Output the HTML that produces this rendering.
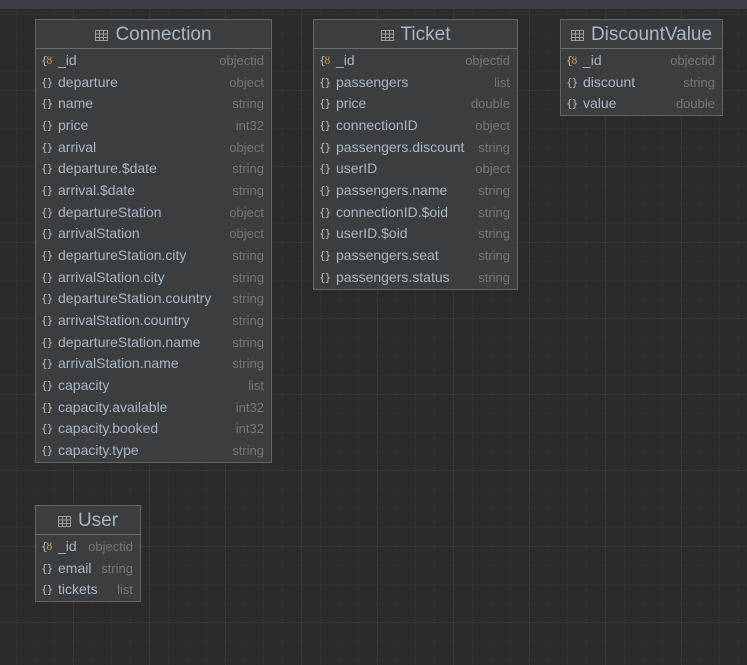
<!DOCTYPE html>
<html><head><style>
html,body{margin:0;padding:0}
body{width:747px;height:665px;overflow:hidden;position:relative;background-color:#2b2b2b;
background-image:
linear-gradient(to right,#363636 1px,transparent 1px),
linear-gradient(to bottom,#363636 1px,transparent 1px),
linear-gradient(to right,#2f2f2f 1px,transparent 1px),
linear-gradient(to bottom,#2f2f2f 1px,transparent 1px);
background-size:76px 76px,76px 76px,19px 19px,19px 19px;
background-position:73px 14px,73px 14px,16px 14px,16px 14px;
font-family:"Liberation Sans","DejaVu Sans",sans-serif}
.top{position:absolute;left:0;top:0;width:747px;height:9px;background:#3c3f41}
.t{position:absolute;background:#3b3d3f;border:1px solid #626466;box-sizing:border-box}
.h{height:28px;border-bottom:1px solid #6a6c6e;text-align:center;color:#a9b7c6;font-size:19px;line-height:29px;white-space:nowrap}
.h svg{vertical-align:-1px;margin-right:7px}
.r{height:21.67px;line-height:21.67px;position:relative;font-size:14px;color:#a9b7c6;white-space:nowrap}
.r .i{position:absolute;left:5px;top:0;color:#b8b8b8;font-size:11px;font-family:"DejaVu Sans Mono",monospace;letter-spacing:-1px}
.r .n{position:absolute;left:22px}
.r .y{position:absolute;right:7px;color:#75777a;font-size:13px}
.k{color:#d9a343}
.b{padding-top:1px}
</style></head><body>
<div class="top"></div>

<div class="t" style="left:35px;top:19px;width:237px;height:444px">
<div class="h"><svg width="13" height="11" viewBox="0 0 13 11"><rect x="0.5" y="0.5" width="12" height="10" fill="none" stroke="#9a9c9e"/><path d="M0 4h13M0 7.5h13M4.5 1v10M8.5 1v10" stroke="#9a9c9e"/></svg>Connection</div>
<div class="b">
<div class="r"><span class="i">{<span class="k">ȣ</span></span><span class="n">_id</span><span class="y">objectid</span></div>
<div class="r"><span class="i">{}</span><span class="n">departure</span><span class="y">object</span></div>
<div class="r"><span class="i">{}</span><span class="n">name</span><span class="y">string</span></div>
<div class="r"><span class="i">{}</span><span class="n">price</span><span class="y">int32</span></div>
<div class="r"><span class="i">{}</span><span class="n">arrival</span><span class="y">object</span></div>
<div class="r"><span class="i">{}</span><span class="n">departure.$date</span><span class="y">string</span></div>
<div class="r"><span class="i">{}</span><span class="n">arrival.$date</span><span class="y">string</span></div>
<div class="r"><span class="i">{}</span><span class="n">departureStation</span><span class="y">object</span></div>
<div class="r"><span class="i">{}</span><span class="n">arrivalStation</span><span class="y">object</span></div>
<div class="r"><span class="i">{}</span><span class="n">departureStation.city</span><span class="y">string</span></div>
<div class="r"><span class="i">{}</span><span class="n">arrivalStation.city</span><span class="y">string</span></div>
<div class="r"><span class="i">{}</span><span class="n">departureStation.country</span><span class="y">string</span></div>
<div class="r"><span class="i">{}</span><span class="n">arrivalStation.country</span><span class="y">string</span></div>
<div class="r"><span class="i">{}</span><span class="n">departureStation.name</span><span class="y">string</span></div>
<div class="r"><span class="i">{}</span><span class="n">arrivalStation.name</span><span class="y">string</span></div>
<div class="r"><span class="i">{}</span><span class="n">capacity</span><span class="y">list</span></div>
<div class="r"><span class="i">{}</span><span class="n">capacity.available</span><span class="y">int32</span></div>
<div class="r"><span class="i">{}</span><span class="n">capacity.booked</span><span class="y">int32</span></div>
<div class="r"><span class="i">{}</span><span class="n">capacity.type</span><span class="y">string</span></div>
</div></div>

<div class="t" style="left:313px;top:19px;width:205px;height:271px">
<div class="h"><svg width="13" height="11" viewBox="0 0 13 11"><rect x="0.5" y="0.5" width="12" height="10" fill="none" stroke="#9a9c9e"/><path d="M0 4h13M0 7.5h13M4.5 1v10M8.5 1v10" stroke="#9a9c9e"/></svg>Ticket</div>
<div class="b">
<div class="r"><span class="i">{<span class="k">ȣ</span></span><span class="n">_id</span><span class="y">objectid</span></div>
<div class="r"><span class="i">{}</span><span class="n">passengers</span><span class="y">list</span></div>
<div class="r"><span class="i">{}</span><span class="n">price</span><span class="y">double</span></div>
<div class="r"><span class="i">{}</span><span class="n">connectionID</span><span class="y">object</span></div>
<div class="r"><span class="i">{}</span><span class="n">passengers.discount</span><span class="y">string</span></div>
<div class="r"><span class="i">{}</span><span class="n">userID</span><span class="y">object</span></div>
<div class="r"><span class="i">{}</span><span class="n">passengers.name</span><span class="y">string</span></div>
<div class="r"><span class="i">{}</span><span class="n">connectionID.$oid</span><span class="y">string</span></div>
<div class="r"><span class="i">{}</span><span class="n">userID.$oid</span><span class="y">string</span></div>
<div class="r"><span class="i">{}</span><span class="n">passengers.seat</span><span class="y">string</span></div>
<div class="r"><span class="i">{}</span><span class="n">passengers.status</span><span class="y">string</span></div>
</div></div>

<div class="t" style="left:560px;top:19px;width:163px;height:97px">
<div class="h"><svg width="13" height="11" viewBox="0 0 13 11"><rect x="0.5" y="0.5" width="12" height="10" fill="none" stroke="#9a9c9e"/><path d="M0 4h13M0 7.5h13M4.5 1v10M8.5 1v10" stroke="#9a9c9e"/></svg>DiscountValue</div>
<div class="b">
<div class="r"><span class="i">{<span class="k">ȣ</span></span><span class="n">_id</span><span class="y">objectid</span></div>
<div class="r"><span class="i">{}</span><span class="n">discount</span><span class="y">string</span></div>
<div class="r"><span class="i">{}</span><span class="n">value</span><span class="y">double</span></div>
</div></div>

<div class="t" style="left:35px;top:505px;width:106px;height:97px">
<div class="h"><svg width="13" height="11" viewBox="0 0 13 11"><rect x="0.5" y="0.5" width="12" height="10" fill="none" stroke="#9a9c9e"/><path d="M0 4h13M0 7.5h13M4.5 1v10M8.5 1v10" stroke="#9a9c9e"/></svg>User</div>
<div class="b">
<div class="r"><span class="i">{<span class="k">ȣ</span></span><span class="n">_id</span><span class="y">objectid</span></div>
<div class="r"><span class="i">{}</span><span class="n">email</span><span class="y">string</span></div>
<div class="r"><span class="i">{}</span><span class="n">tickets</span><span class="y">list</span></div>
</div></div>
</body></html>
